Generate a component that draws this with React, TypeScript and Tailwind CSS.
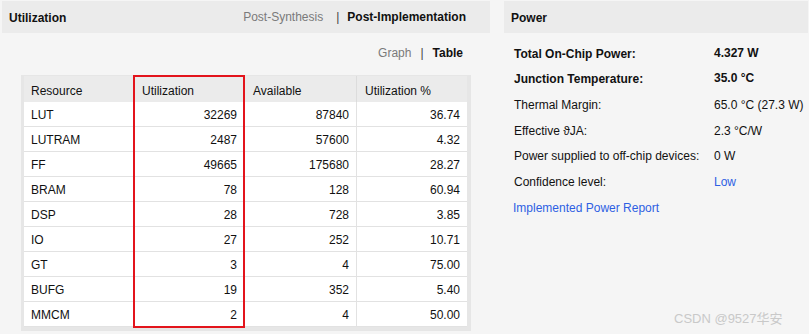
import React from "react";

const rows: [string, string, string, string][] = [
  ["LUT", "32269", "87840", "36.74"],
  ["LUTRAM", "2487", "57600", "4.32"],
  ["FF", "49665", "175680", "28.27"],
  ["BRAM", "78", "128", "60.94"],
  ["DSP", "28", "728", "3.85"],
  ["IO", "27", "252", "10.71"],
  ["GT", "3", "4", "75.00"],
  ["BUFG", "19", "352", "5.40"],
  ["MMCM", "2", "4", "50.00"],
];

const power: { label: string; value: string; bold?: boolean; link?: boolean }[] = [
  { label: "Total On-Chip Power:", value: "4.327 W", bold: true },
  { label: "Junction Temperature:", value: "35.0 °C", bold: true },
  { label: "Thermal Margin:", value: "65.0 °C (27.3 W)" },
  { label: "Effective \u03D1JA:", value: "2.3 °C/W" },
  { label: "Power supplied to off-chip devices:", value: "0 W" },
  { label: "Confidence level:", value: "Low", link: true },
];

export default function App() {
  return (
    <div
      className="relative w-[809px] h-[334px] bg-[#f5f5f5] flex pl-[2px] pt-[1px] text-[12px] text-[#111]"
      style={{ fontFamily: '"Liberation Sans", Arial, sans-serif' }}
    >
      {/* Utilization panel */}
      <div className="w-[488px] flex flex-col">
        <div className="h-[32px] bg-[#ebebeb] flex items-center justify-between pl-[7px] pr-[24px]">
          <span className="font-bold pt-[2px]">Utilization</span>
          <div className="flex items-center">
            <span className="text-[#7a7a7a]">Post-Synthesis</span>
            <span className="text-[#444] ml-[13px] mr-[8px]">|</span>
            <span className="font-bold">Post-Implementation</span>
          </div>
        </div>
        <div className="h-[40px] flex items-center justify-end pr-[27px] pb-[1px]">
          <span className="text-[#7a7a7a]">Graph</span>
          <span className="text-[#444] ml-[9px] mr-[9px]">|</span>
          <span className="font-bold">Table</span>
        </div>
        <div className="relative ml-[19px] mt-[2px] w-[450px] bg-[#e6e6e6] pt-[1px] px-[3px] pb-[4px]">
          <div className="grid grid-cols-[109px_111px_112px_111px]">
            <div className="h-[26px] flex items-center pt-[3px] pl-[7px] bg-[#ebebeb]">Resource</div>
            <div className="h-[26px] flex items-center pt-[3px] pl-[8px] bg-[#ebebeb] border-l border-[#dcdcdc]">Utilization</div>
            <div className="h-[26px] flex items-center pt-[3px] pl-[8px] bg-[#ebebeb] border-l border-[#dcdcdc]">Available</div>
            <div className="h-[26px] flex items-center pt-[3px] pl-[8px] bg-[#ebebeb] border-l border-[#dcdcdc]">Utilization %</div>
            {rows.map((r, i) => (
              <React.Fragment key={i}>
                <div className="h-[25px] bg-white border-b border-[#e2e2e2] flex items-center pt-[1px] pl-[7px]">{r[0]}</div>
                <div className="h-[25px] bg-white border-b border-l border-[#e2e2e2] flex items-center justify-end pt-[1px] pr-[7px]">{r[1]}</div>
                <div className="h-[25px] bg-white border-b border-l border-[#e2e2e2] flex items-center justify-end pt-[1px] pr-[7px]">{r[2]}</div>
                <div className="h-[25px] bg-white border-b border-l border-[#e2e2e2] flex items-center justify-end pt-[1px] pr-[7px]">{r[3]}</div>
              </React.Fragment>
            ))}
          </div>
          <div className="absolute left-[112px] top-0 w-[112px] h-[253px] border-2 border-[#e3141c]" />
        </div>
      </div>

      {/* Power panel */}
      <div className="w-[304px] ml-[14px] flex flex-col">
        <div className="h-[32px] bg-[#ebebeb] flex items-center pl-[7px]">
          <span className="font-bold pt-[1px]">Power</span>
        </div>
        <div className="flex flex-col pt-[8px]">
          {power.map((p, i) => (
            <div key={i} className="h-[25.6px] flex items-center pl-[10px]">
              <span className={`w-[200px] ${p.bold ? "font-bold" : ""}`}>{p.label}</span>
              <span
                className={`${p.bold ? "font-bold -mt-[2px]" : ""} ${p.link ? "text-[#2e5fe3]" : ""}`}
              >
                {p.value}
              </span>
            </div>
          ))}
          <div className="h-[25.6px] flex items-center pl-[9px] pt-[1px] text-[#2e5fe3]">
            Implemented Power Report
          </div>
        </div>
      </div>

      <div
        className="absolute left-[674px] top-[309px] text-[13px] text-[#c9c9c9]"
        style={{ fontFamily: '"Liberation Sans", "Noto Sans CJK SC", sans-serif' }}
      >
        CSDN @9527华安
      </div>
    </div>
  );
}
